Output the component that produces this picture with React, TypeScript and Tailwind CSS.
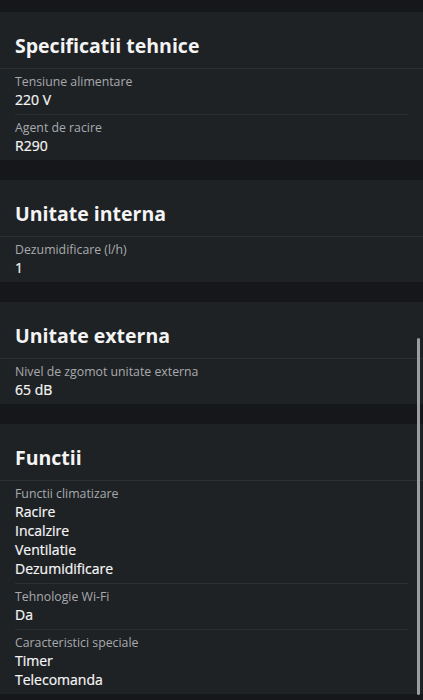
import React from "react";

type Item = { label: string; values: string[] };
type Section = { title: string; items: Item[] };

const sections: Section[] = [
  {
    title: "Specificatii tehnice",
    items: [
      { label: "Tensiune alimentare", values: ["220 V"] },
      { label: "Agent de racire", values: ["R290"] },
    ],
  },
  {
    title: "Unitate interna",
    items: [{ label: "Dezumidificare (l/h)", values: ["1"] }],
  },
  {
    title: "Unitate externa",
    items: [{ label: "Nivel de zgomot unitate externa", values: ["65 dB"] }],
  },
  {
    title: "Functii",
    items: [
      {
        label: "Functii climatizare",
        values: ["Racire", "Incalzire", "Ventilatie", "Dezumidificare"],
      },
      { label: "Tehnologie Wi-Fi", values: ["Da"] },
      { label: "Caracteristici speciale", values: ["Timer", "Telecomanda"] },
    ],
  },
];

function Card({ s }: { s: Section }) {
  return (
    <div className="bg-[#1f2225]">
      <div className="px-[15px] pt-[20px] pb-[8px] border-b border-[#2c2f32]">
        <h2 className="text-[19.5px] leading-[28px] font-bold text-[#f4f4f4]">{s.title}</h2>
      </div>
      <div className="px-[15px]">
        {s.items.map((it, i) => (
          <div
            key={i}
            className={
              "pt-[5px] pb-[5px] " +
              (i < s.items.length - 1 ? "border-b border-[#2c2f32]" : "")
            }
          >
            <div className="text-[12.3px] leading-[16px] text-[#a7aaad]">{it.label}</div>
            {it.values.map((v, j) => (
              <div
                key={j}
                className="text-[14px] leading-[19px] font-normal text-[#f6f6f6] [-webkit-text-stroke:0.2px_#f6f6f6]"
              >
                {v}
              </div>
            ))}
          </div>
        ))}
      </div>
    </div>
  );
}

export default function App() {
  return (
    <div
      className="relative w-[423px] h-[700px] overflow-hidden bg-[#15171a]"
      style={{ fontFamily: '"Open Sans", "Noto Sans", sans-serif' }}
    >
      <div className="flex flex-col gap-[20px] pt-[12px]">
        {sections.map((s, i) => (
          <Card key={i} s={s} />
        ))}
      </div>
      <div className="absolute right-[3px] top-[338px] w-[3px] h-[357px] rounded-full bg-[#9a9da1]" />
    </div>
  );
}
